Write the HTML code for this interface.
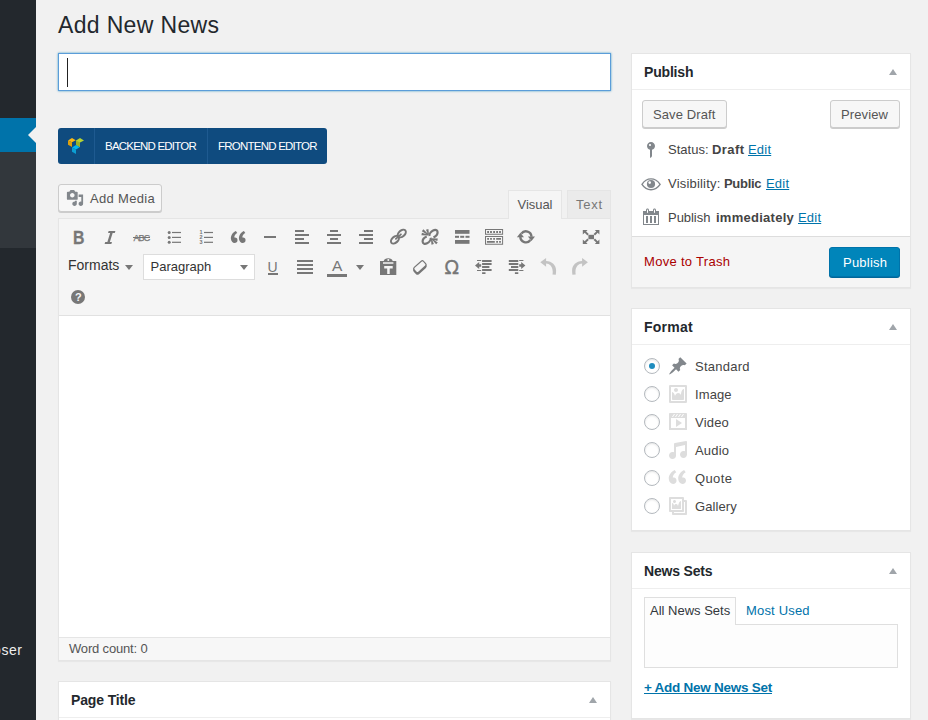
<!DOCTYPE html>
<html lang="en">
<head>
<meta charset="utf-8">
<title>Add New News</title>
<style>
*{box-sizing:border-box;margin:0;padding:0}
html,body{width:928px;height:720px;overflow:hidden;background:#f1f1f1;font-family:"Liberation Sans",sans-serif;font-size:13px;color:#444}
.abs{position:absolute}
.t{position:absolute;white-space:nowrap;line-height:20px;height:20px}
a{color:#0073aa;text-decoration:underline}
#menu{left:0;top:0;width:36px;height:720px;background:#23282d;overflow:hidden}
#menu .cur{left:0;top:118px;width:36px;height:34px;background:#0073aa}
#menu .sub{left:0;top:152px;width:36px;height:96px;background:#32373c}
#menu .arrow{left:28px;top:127px;width:0;height:0;border:8px solid transparent;border-right-color:#f1f1f1;border-left-width:0}
#title{left:58px;top:53px;width:553px;height:38px;background:#fff;border:1px solid #5b9dd9;box-shadow:0 0 2px rgba(30,140,190,.8)}
#title i{position:absolute;left:8px;top:4px;width:1px;height:29px;background:#222}
#vc{left:58px;top:128px;width:269px;height:36px;background:#0f4b7f;border-radius:3px;color:#fff;font-size:12px}
#vc .sep{position:absolute;top:0;width:1px;height:36px;background:#1e5a90}
.box{position:absolute;background:#fff;border:1px solid #e5e5e5;box-shadow:0 1px 1px rgba(0,0,0,.04)}
.box .hd{position:absolute;left:0;top:0;right:0;height:36px;border-bottom:1px solid #eee}
.h3{font-size:14px;font-weight:700;color:#23282d}
.tri{position:absolute;width:0;height:0;border:4.5px solid transparent;border-top-width:0;border-bottom:6px solid #a0a5aa}
.btn{position:absolute;background:#f7f7f7;border:1px solid #ccc;border-radius:3px;box-shadow:0 1px 0 #ccc;color:#555}
.ic{position:absolute;width:20px;height:20px;fill:#777;overflow:visible}
.radio{position:absolute;left:12px;width:16px;height:16px;border:1px solid #b4b9be;border-radius:50%;background:#fff;box-shadow:inset 0 1px 2px rgba(0,0,0,.1)}
.radio.on:after{content:"";position:absolute;left:4px;top:4px;width:6px;height:6px;border-radius:50%;background:#1e8cbe}
</style>
</head>
<body>
<div id="menu" class="abs">
  <div class="cur abs"></div>
  <div class="sub abs"></div>
  <div class="arrow abs"></div>
  <span class="t" style="left:-7px;top:640px;color:#eee;font-size:14px;letter-spacing:0.59px">oser</span>
</div>

<h1 class="t" style="left:58px;top:11px;font-size:23px;font-weight:400;color:#23282d;line-height:29px;height:29px;letter-spacing:0.34px">Add New News</h1>
<div id="title" class="abs"><i></i></div>

<div id="vc" class="abs">
  <svg class="abs" style="left:10px;top:9px" width="17" height="18" viewBox="0 0 17 18">
    <polygon points="0,3.5 4,1 7.7,3.2 4,5.3" fill="#fdb814"/>
    <polygon points="0,3.5 4,5.3 4,10 0,7.7" fill="#dda00d"/>
    <polygon points="8,3.5 12,1 16,3.5 12,5.5 12,10 8,8" fill="#b5d334"/>
    <polygon points="8,3.5 12,5.5 12,10 8,8" fill="#9ab029"/>
    <polygon points="4,10.5 8,8 11.7,10.3 8,12.5" fill="#00b7f1"/>
    <polygon points="4,10.5 8,12.5 8,17 4,14.7" fill="#0b9fd4"/>
  </svg>
  <div class="sep" style="left:36px"></div>
  <div class="sep" style="left:149px"></div>
  <span class="t" style="left:47px;top:8px;font-size:11.500px;letter-spacing:-0.79px">BACKEND EDITOR</span>
  <span class="t" style="left:160px;top:8px;font-size:11.500px;letter-spacing:-0.77px">FRONTEND EDITOR</span>
</div>

<!-- Add Media -->
<div class="btn" style="left:58px;top:184px;width:104px;height:28px">
  <svg class="abs" style="left:7px;top:4px;fill:#82878c" width="18" height="18" viewBox="0 0 20 20"><path d="M13 11V4c0-.55-.45-1-1-1h-1.670L9 1H5L3.670 3H2c-.55 0-1 .45-1 1v7c0 .55.450 1 1 1h10c.55 0 1-.45 1-1zM7 4.500c1.380 0 2.500 1.120 2.500 2.500S8.380 9.500 7 9.500 4.500 8.380 4.500 7 5.620 4.500 7 4.500zM14 6h5v10.500c0 1.380-1.120 2.500-2.500 2.500S14 17.880 14 16.500s1.120-2.500 2.500-2.500c.17 0 .34.020.5.050V9h-3V6zm-4 8.050V13h2v3.500c0 1.380-1.120 2.500-2.500 2.500S7 17.880 7 16.500 8.120 14 9.500 14c.17 0 .34.020.5.050z"/></svg>
  <span class="t" style="left:31px;top:4px;letter-spacing:0.32px">Add Media</span>
</div>

<!-- editor tabs -->
<div class="abs" style="left:567px;top:190px;width:44px;height:29px;background:#ebebeb;border:1px solid #e5e5e5"></div>
<span class="t" style="left:576px;top:195px;color:#777;letter-spacing:0.72px">Text</span>

<!-- editor -->
<div class="abs" id="ed" style="left:58px;top:218px;width:553px;height:443px;background:#fff;border:1px solid #e5e5e5;box-shadow:0 1px 1px rgba(0,0,0,.04)">
  <div class="abs" style="left:0;top:0;width:551px;height:97px;background:#f5f5f5;border-bottom:1px solid #e1e1e1"></div>
  <div class="abs" style="left:0;top:418px;width:551px;height:23px;background:#f7f7f7;border-top:1px solid #e5e5e5"></div>
  <span class="t" style="left:10px;top:420px;color:#555;letter-spacing:-0.17px">Word count: 0</span>
</div>
<div class="abs" style="left:508px;top:190px;width:54px;height:29px;background:#f5f5f5;border:1px solid #e5e5e5;border-bottom:0"></div>
<span class="t" style="left:517.500px;top:195px;color:#555;letter-spacing:-0.04px">Visual</span>

<div id="tb">
<!-- row 1 -->
<span class="t" style="left:72.500px;top:228px;font-size:18px;font-weight:700;color:#777;transform:scaleX(.88);transform-origin:0 0;-webkit-text-stroke:.3px #777">B</span>
<svg class="ic" style="left:100px;top:227px" viewBox="0 0 20 20"><path d="M14.780 6h-2.130l-2.800 9h2.120l-.62 2H4.600l.62-2h2.140l2.800-9H8.030l.62-2h6.750z"/></svg>
<span class="t" style="left:133.500px;top:228px;font-size:9px;font-weight:400;color:#777;letter-spacing:-0.9px;-webkit-text-stroke:.25px #777">ABC</span>
<div class="abs" style="left:133px;top:237px;width:17px;height:1px;background:#777"></div>
<svg class="ic" style="left:164px;top:227px" viewBox="0 0 20 20"><circle cx="5.200" cy="5.500" r="1.500"/><circle cx="5.200" cy="10.400" r="1.500"/><circle cx="5.200" cy="15.300" r="1.500"/><rect x="8" y="4.900" width="9" height="1.200"/><rect x="8" y="9.800" width="9" height="1.200"/><rect x="8" y="14.700" width="9" height="1.200"/></svg>
<svg class="ic" style="left:196px;top:227px" viewBox="0 0 20 20"><rect x="8" y="4.900" width="9" height="1.200"/><rect x="8" y="9.800" width="9" height="1.200"/><rect x="8" y="14.700" width="9" height="1.200"/><text x="3.600" y="7.300" font-size="5.500" font-weight="700" font-family="Liberation Sans, sans-serif">1</text><text x="3.600" y="12.300" font-size="5.500" font-weight="700" font-family="Liberation Sans, sans-serif">2</text><text x="3.600" y="17.200" font-size="5.500" font-weight="700" font-family="Liberation Sans, sans-serif">3</text></svg>
<svg class="ic" style="left:228px;top:227px" viewBox="0 0 20 20"><path d="M9.490 13.220c0-.74-.2-1.380-.61-1.900-.62-.78-1.830-.88-2.530-.72-.29-1.650 1.110-3.750 2.920-4.650L7.880 4c-2.730 1.300-5.420 4.280-4.960 8.050C3.210 14.430 4.590 16 6.540 16c.85 0 1.560-.25 2.120-.75s.83-1.180.83-2.030zm8.050 0c0-.74-.2-1.380-.61-1.900-.63-.78-1.830-.88-2.530-.72-.29-1.650 1.110-3.750 2.920-4.650L15.930 4c-2.730 1.300-5.410 4.280-4.950 8.050.29 2.380 1.660 3.950 3.610 3.950.85 0 1.560-.25 2.120-.75s.83-1.180.83-2.030z"/></svg>
<svg class="ic" style="left:260px;top:227px" viewBox="0 0 20 20"><rect x="4" y="9" width="12" height="2"/></svg>
<svg class="ic" style="left:292px;top:227px" viewBox="0 0 20 20"><rect x="3" y="3" width="9" height="2"/><rect x="3" y="7" width="14" height="2"/><rect x="3" y="11" width="9" height="2"/><rect x="3" y="15" width="14" height="2"/></svg>
<svg class="ic" style="left:324px;top:227px" viewBox="0 0 20 20"><rect x="6" y="3" width="8" height="2"/><rect x="3" y="7" width="14" height="2"/><rect x="6" y="11" width="8" height="2"/><rect x="3" y="15" width="14" height="2"/></svg>
<svg class="ic" style="left:356px;top:227px" viewBox="0 0 20 20"><rect x="8" y="3" width="9" height="2"/><rect x="3" y="7" width="14" height="2"/><rect x="8" y="11" width="9" height="2"/><rect x="3" y="15" width="14" height="2"/></svg>
<svg class="ic" style="left:388px;top:227px" viewBox="0 0 20 20"><g transform="translate(10.400 9.600) rotate(-42)"><ellipse cx="-4.600" cy="0" rx="5.700" ry="4"/><ellipse cx="4.600" cy="0" rx="5.700" ry="4"/><ellipse cx="-4.600" cy="0" rx="3.700" ry="1.900" fill="#f5f5f5"/><ellipse cx="4.600" cy="0" rx="3.700" ry="1.900" fill="#f5f5f5"/><rect x="-4.300" y="-0.900" width="8.600" height="1.800" rx="0.900"/></g></svg>
<svg class="ic" style="left:420px;top:227px" viewBox="0 0 20 20"><g transform="translate(10.100 9.900) rotate(-42)" fill="none" stroke="#777" stroke-width="2.200"><path d="M0.140-1.030A4.750 3 0 1 1 2.200 2.600"/><path d="M-0.140 1.030A4.750 3 0 1 1-2.200-2.600"/></g><path d="M8.65 7.56L3.36 2.30L1.82 4.26L8.15 8.18zM8.99 7.49L8.38 2.03L5.96 2.69L8.21 7.71zM8.18 7.81L1.91 5.72L1.43 8.18L8.02 8.59zM11.38 11.93L17.33 13.99L17.81 11.53L11.54 11.15zM11.34 12.00L16.13 17.37L17.79 15.49L11.86 11.40zM10.91 12.00L11.47 17.66L13.89 17.04L11.69 11.80z"/></svg>
<svg class="ic" style="left:452px;top:227px" viewBox="0 0 20 20"><rect x="3" y="3" width="14.500" height="3.800"/><rect x="3" y="8.800" width="4" height="2"/><rect x="8.200" y="8.800" width="4" height="2"/><rect x="13.500" y="8.800" width="4" height="2"/><rect x="3" y="13" width="14.500" height="3.800"/></svg>
<svg class="ic" style="left:484px;top:227px" viewBox="0 0 20 20"><path fill-rule="evenodd" d="M1 2h18.100v5.700H1zM2 3v3.700h16.100V3zM1 9h18.100v8.700H1zM2 10v6.700h16.100V10z"/><path d="M3.200 4.100h1.800v1.800H3.200zM6.100 4.100h1.800v1.800H6.100zM9.200 4.100h1.800v1.800H9.200zM12.200 4.100h1.800v1.800h-1.800zM15.100 4.100h1.800v1.800h-1.800zM3.200 11h1.800v1.700H3.200zM6.100 11h1.800v1.700H6.100zM9.200 11h1.800v1.700H9.200zM12.200 11h4.800v1.700h-4.800zM2.900 14.100h7.900v1.700H2.900zM12.200 14.100h1.800v1.700h-1.800zM15.100 14.100h1.800v1.700h-1.800z"/></svg>
<svg class="ic" style="left:516px;top:227px" viewBox="0 0 20 20"><g fill="none" stroke="#777" stroke-width="2.400"><path d="M5.400 6.600A5.550 5.550 0 0 1 15.450 9.800"/><path d="M14.400 13A5.550 5.550 0 0 1 4.350 9.800"/></g><path d="M11.900 9.400h7.100l-3.500 4.600zM0.900 10.300h7.100L4.400 5.700z"/></svg>
<svg class="ic" style="left:581px;top:227px" viewBox="0 0 20 20"><rect x="7.400" y="7.800" width="5.600" height="4.400"/><path d="M1.800 2.900h4.800L5.100 4.400l2.700 2.500-1.400 1.500-2.700-2.600L1.800 7.500zM18.400 2.900v4.600l-1.700-1.700-2.700 2.600-1.400-1.500 2.700-2.500-1.500-1.500zM1.800 17.100v-4.600l1.900 1.700 2.700-2.600 1.400 1.500-2.700 2.500 1.500 1.500zM18.400 17.100h-4.600l1.500-1.500-2.700-2.500 1.400-1.500 2.700 2.600 1.700-1.700z"/></svg>
<!-- row 2 -->
<span class="t" style="left:68px;top:255px;font-size:14px;color:#333">Formats</span>
<div class="abs" style="left:125px;top:265px;width:0;height:0;border:4px solid transparent;border-bottom-width:0;border-top:5.500px solid #777"></div>
<div class="abs" style="left:143px;top:254px;width:112px;height:26px;background:#fff;border:1px solid #ddd"></div>
<span class="t" style="left:150.500px;top:257px;font-size:13px;color:#333">Paragraph</span>
<div class="abs" style="left:240px;top:265px;width:0;height:0;border:4px solid transparent;border-bottom-width:0;border-top:5.500px solid #777"></div>
<span class="t" style="left:267.500px;top:257px;font-size:14px;color:#777">U</span>
<div class="abs" style="left:268px;top:273px;width:10px;height:2px;background:#777"></div>
<svg class="ic" style="left:295px;top:257px" viewBox="0 0 20 20"><rect x="2" y="3" width="16" height="2"/><rect x="2" y="7" width="16" height="2"/><rect x="2" y="11" width="16" height="2"/><rect x="2" y="15" width="16" height="2"/></svg>
<span class="t" style="left:332px;top:256px;font-size:15.500px;color:#777">A</span>
<div class="abs" style="left:327px;top:274px;width:20px;height:3px;background:#777"></div>
<div class="abs" style="left:356px;top:265px;width:0;height:0;border:4px solid transparent;border-bottom-width:0;border-top:5.500px solid #777"></div>
<svg class="ic" style="left:378px;top:257px" viewBox="0 0 20 20"><path fill-rule="evenodd" d="M2 4h3.700a4.600 3.600 0 0 1 9 0H18.300v14H2zM5 5.300v1.500h10.400V5.300zM6.200 9v2.400h3v5.600h2.500v-5.600h3V9zM9.300 3a1 1 0 1 0 2 0 1 1 0 0 0-2 0z"/></svg>
<svg class="ic" style="left:410px;top:257px" viewBox="0 0 20 20"><g transform="translate(9.900 11.200) rotate(-42)"><rect x="-6.900" y="-3.800" width="13.800" height="7.600" rx="2.200"/></g><g transform="translate(9.900 9.700) rotate(-42)"><rect x="-6.900" y="-3.800" width="13.800" height="7.600" rx="2.200"/><rect x="-5.700" y="-2.600" width="11.400" height="5.200" rx="1.100" fill="#f5f5f5"/></g></svg>
<span class="t" style="left:444.500px;top:257px;font-size:19px;color:#777;font-family:'DejaVu Sans',sans-serif;-webkit-text-stroke:.3px #777">Ω</span>
<svg class="ic" style="left:474px;top:257px" viewBox="0 0 20 20"><path d="M1 8.500l4.200-3.400v2.200h2v2.400h-2v2.200zM3 3h4.200v1H3zM3 13h4.200v1H3zM8.100 3h9.500v1.900H8.100zM8.100 6.100h9.500v1.900H8.100zM8.100 9.100h7.300v1.900H8.100zM8.100 12.100h9.500v1.900H8.100zM8.100 15.200h3.400v1.800H8.100z"/></svg>
<svg class="ic" style="left:506px;top:257px" viewBox="0 0 20 20"><path transform="translate(20.400 0) scale(-1 1)" d="M1 8.500l4.200-3.400v2.200h2v2.400h-2v2.200zM3 3h4.200v1H3zM3 13h4.200v1H3zM8.100 3h9.500v1.900H8.100zM8.100 6.100h9.500v1.900H8.100zM8.100 9.100h7.300v1.900H8.100zM8.100 12.100h9.500v1.900H8.100zM8.100 15.200h3.400v1.800H8.100z"/></svg>
<svg class="ic" style="left:538px;top:257px;fill:#c3c3c3" viewBox="0 0 20 20"><path d="M2.300 5.300L8.100 1.100V3.900C14 4 18.100 8 18.100 13.500C18.100 15 18 16.500 17.800 17.700L14.500 17.400C14.700 16.300 14.800 15.200 14.700 14.200C14.500 9.500 11.500 6.800 8.100 6.600V9.800z"/></svg>
<svg class="ic" style="left:570px;top:257px;fill:#c3c3c3" viewBox="0 0 20 20"><path transform="translate(20.200 0) scale(-1 1)" d="M2.300 5.300L8.100 1.100V3.900C14 4 18.100 8 18.100 13.500C18.100 15 18 16.500 17.800 17.700L14.500 17.400C14.700 16.300 14.800 15.200 14.700 14.200C14.500 9.500 11.500 6.800 8.100 6.600V9.800z"/></svg>
<!-- row 3 -->
<div class="abs" style="left:71px;top:290px;width:14px;height:14px;border-radius:50%;background:#777"></div>
<span class="t" style="left:75px;top:287px;font-size:11px;font-weight:700;color:#f5f5f5">?</span>
</div>

<!-- Page Title box -->
<div class="box" style="left:58px;top:681px;width:553px;height:60px">
  <div class="hd"></div>
  <span class="t h3" style="left:12px;top:8px;letter-spacing:-0.14px">Page Title</span>
  <div class="tri" style="left:529.500px;top:15px"></div>
</div>

<!-- Publish -->
<div class="box" style="left:631px;top:53px;width:280px;height:235px">
  <div class="hd"></div>
  <span class="t h3" style="left:12px;top:8px;letter-spacing:-0.18px">Publish</span>
  <div class="tri" style="left:256.500px;top:15px"></div>
  <div class="btn" style="left:10px;top:46px;width:85px;height:28px"></div>
  <span class="t" style="left:21px;top:51px;color:#555;letter-spacing:0.10px">Save Draft</span>
  <div class="btn" style="left:198px;top:46px;width:70px;height:28px"></div>
  <span class="t" style="left:209px;top:51px;color:#555;letter-spacing:0.12px">Preview</span>


  <svg class="abs" style="left:9px;top:86px;fill:#82878c" width="20" height="20" viewBox="0 0 20 20"><path d="M14 6c0 1.860-1.280 3.410-3 3.860V16c0 1-2 2-2 2V9.860c-1.720-.45-3-2-3-3.860 0-2.210 1.790-4 4-4s4 1.790 4 4zM8 5c0 .55.450 1 1 1s1-.45 1-1-.45-1-1-1-1 .45-1 1z"/></svg>
  <svg class="abs" style="left:9px;top:120px" width="20" height="20" viewBox="0 0 20 20"><path d="M1 10.300C3.800 6 7 4.900 10 4.900s6.200 1.100 9.100 5.400C16.200 14.600 13 15.700 10 15.700S3.800 14.600 1 10.300z" fill="none" stroke="#82878c" stroke-width="1.400"/><circle cx="10" cy="10" r="4.100" fill="#82878c"/><circle cx="8.700" cy="8.600" r="1.300" fill="#fff"/></svg>
  <svg class="abs" style="left:9px;top:152.500px;fill:#82878c" width="20" height="20" viewBox="0 0 20 20"><path d="M15 4h3v14H2V4h3V3c0-.83.670-1.500 1.500-1.500S8 2.170 8 3v1h4V3c0-.83.670-1.500 1.500-1.500S15 2.170 15 3v1zM6 3v2.500c0 .28.220.5.500.5s.5-.22.500-.5V3c0-.28-.22-.5-.5-.5S6 2.720 6 3zm7 0v2.500c0 .28.220.5.500.5s.5-.22.500-.5V3c0-.28-.22-.5-.5-.5s-.5.220-.5.500zm4 14V8H3v9h14zM7 16V9H5v7h2zm4 0V9H9v7h2zm4 0V9h-2v7h2z"/></svg>
  <span class="t" style="left:36px;top:86px;letter-spacing:0.01px">Status:</span>
  <span class="t" style="left:80px;top:86px;font-weight:700;letter-spacing:0.41px">Draft</span>
  <a class="t" style="left:116px;top:86px;letter-spacing:0.20px">Edit</a>

  <span class="t" style="left:36px;top:120px;letter-spacing:0.20px">Visibility:</span>
  <span class="t" style="left:92px;top:120px;font-weight:700;letter-spacing:-0.30px">Public</span>
  <a class="t" style="left:134px;top:120px;letter-spacing:0.20px">Edit</a>

  <span class="t" style="left:36px;top:154px;letter-spacing:-0.04px">Publish</span>
  <span class="t" style="left:84px;top:154px;font-weight:700;letter-spacing:0.26px">immediately</span>
  <a class="t" style="left:166px;top:154px;letter-spacing:0.20px">Edit</a>

  <div class="abs" style="left:0;top:182px;width:278px;height:51px;background:#f5f5f5;border-top:1px solid #ddd"></div>
  <span class="t" style="left:12px;top:198px;color:#a00;letter-spacing:0.30px">Move to Trash</span>
  <div class="abs" style="left:197px;top:193px;width:71px;height:30px;background:#0085ba;border:1px solid #0073aa;border-radius:3px;box-shadow:0 1px 0 #006799"></div>
  <span class="t" style="left:211px;top:199px;color:#fff;letter-spacing:0.23px">Publish</span>
</div>

<!-- Format -->
<div class="box" style="left:631px;top:308px;width:280px;height:223px">
  <div class="hd"></div>
  <span class="t h3" style="left:12px;top:8px;letter-spacing:0.23px">Format</span>
  <div class="tri" style="left:256.500px;top:15px"></div>
  <div class="radio on" style="top:49px"></div>
  <div class="radio" style="top:77px"></div>
  <div class="radio" style="top:105px"></div>
  <div class="radio" style="top:133px"></div>
  <div class="radio" style="top:161px"></div>
  <div class="radio" style="top:189px"></div>
  <span class="t" style="left:63px;top:48px;letter-spacing:0.25px">Standard</span>
  <span class="t" style="left:63px;top:76px;letter-spacing:0.11px">Image</span>
  <span class="t" style="left:63px;top:104px;letter-spacing:0.20px">Video</span>
  <span class="t" style="left:63px;top:132px;letter-spacing:0.19px">Audio</span>
  <span class="t" style="left:63px;top:160px;letter-spacing:0.39px">Quote</span>
  <span class="t" style="left:63px;top:188px;letter-spacing:0.09px">Gallery</span>
  <div id="fi">
  <svg class="abs" style="left:35.500px;top:47px;fill:#82878c" width="20" height="20" viewBox="0 0 20 20"><path d="M10.440 3.020l1.820-1.820 6.360 6.350-1.830 1.820c-1.050-.68-2.480-.57-3.410.36l-.75.750c-.92.930-1.040 2.350-.35 3.410l-1.830 1.820-2.410-2.410-2.800 2.790c-.42.420-3.380 2.710-3.800 2.290s1.860-3.390 2.280-3.810l2.790-2.790L4.100 9.360l1.830-1.820c1.050.690 2.480.57 3.400-.36l.75-.75c.93-.92 1.050-2.350.36-3.410z"/></svg>
  <svg class="abs" style="left:35.500px;top:75px;fill:#ddd" width="20" height="20" viewBox="0 0 20 20"><path d="M2.250 1h15.500c.69 0 1.250.56 1.250 1.250v15.500c0 .69-.56 1.250-1.250 1.250H2.250C1.560 19 1 18.440 1 17.750V2.250C1 1.560 1.560 1 2.250 1zM17 17V3H3v14h14zM10 6c0-1.100-.9-2-2-2s-2 .9-2 2 .9 2 2 2 2-.9 2-2zm3 5s0-6 3-6v10c0 .55-.45 1-1 1H5c-.55 0-1-.45-1-1V8c2 0 3 4 3 4s1-3 3-3 3 2 3 2z"/></svg>
  <svg class="abs" style="left:35.500px;top:103px;fill:#ddd" width="20" height="20" viewBox="0 0 20 20"><path d="M2 1h16c.55 0 1 .45 1 1v16l-18-.02V2c0-.55.450-1 1-1zm4 1L4 5h1l2-3H6zm4 0H9L7 5h1zm3 0h-1l-2 3h1zm3 0h-1l-2 3h1zm1 14V6H3v10h14zM8 7l6 4-6 4V7z"/></svg>
  <svg class="abs" style="left:35.500px;top:131px;fill:#ddd" width="20" height="20" viewBox="0 0 20 20"><path d="M6.990 3.080l11.020-2c.55-.08.990.45.990 1V14.500c0 1.940-1.570 3.500-3.500 3.500S12 16.440 12 14.500c0-1.930 1.570-3.500 3.500-3.500.54 0 1.040.14 1.500.35V5.080l-9 2V16c-.24 1.700-1.740 3-3.500 3C2.570 19 1 17.440 1 15.500 1 13.570 2.570 12 4.500 12c.54 0 1.040.14 1.500.35V4.080c0-.55.440-.91.990-1z"/></svg>
  <svg class="abs" style="left:35.500px;top:159px;fill:#ddd" width="20" height="20" viewBox="0 0 20 20"><path d="M8.540 12.740c0-.87-.24-1.610-.72-2.220-.73-.92-2.140-1.030-2.960-.85-.34-1.930 1.300-4.390 3.420-5.450L6.650 1.940C3.450 3.460.31 6.960.85 11.370 1.190 14.160 2.800 16 5.080 16c1 0 1.830-.29 2.480-.88.660-.59.980-1.380.98-2.380zm9.430 0c0-.87-.24-1.610-.72-2.220-.73-.92-2.140-1.030-2.960-.85-.34-1.930 1.300-4.390 3.420-5.450l-1.630-2.280c-3.200 1.520-6.340 5.020-5.800 9.430.34 2.790 1.950 4.630 4.230 4.630 1 0 1.830-.29 2.480-.88.660-.59.980-1.380.98-2.380z"/></svg>
  <svg class="abs" style="left:35.500px;top:187px;fill:#ddd" width="20" height="20" viewBox="0 0 20 20"><path d="M16 4h1.960c.57 0 1.040.47 1.040 1.040v12.920c0 .57-.47 1.040-1.040 1.040H5.040C4.470 19 4 18.530 4 17.960V16H2.040C1.470 16 1 15.530 1 14.960V2.040C1 1.470 1.470 1 2.040 1h12.920c.57 0 1.040.47 1.040 1.040V4zM3 14h11V3H3v11zm5-8.500C8 4.670 7.330 4 6.500 4S5 4.670 5 5.500 5.670 7 6.500 7 8 6.330 8 5.500zm2 4.500s1-5 3-5v8H4V7c2 0 2 3 2 3s.33-2 2-2 2 2 2 2zm7 7V6h-1v8.960c0 .57-.47 1.040-1.040 1.040H6v1h11z"/></svg>
  </div>
</div>

<!-- News Sets -->
<div class="box" style="left:631px;top:552px;width:280px;height:167px">
  <div class="hd"></div>
  <span class="t h3" style="left:12px;top:8px;letter-spacing:-0.18px">News Sets</span>
  <div class="tri" style="left:256.500px;top:15px"></div>
  <div class="abs" style="left:12px;top:71px;width:254px;height:44px;background:#fdfdfd;border:1px solid #dfdfdf"></div>
  <div class="abs" style="left:12px;top:44px;width:92px;height:28px;background:#fdfdfd;border:1px solid #dfdfdf;border-bottom:0"></div>
  <span class="t" style="left:18px;top:48px;color:#32373c;letter-spacing:-0.00px">All News Sets</span>
  <span class="t" style="left:114px;top:48px;color:#0073aa;letter-spacing:0.18px">Most Used</span>
  <a class="t" style="left:12px;top:125px;font-size:13.5px;font-weight:700;text-decoration:underline;letter-spacing:-0.26px">+ Add New News Set</a>
</div>

</body>
</html>
